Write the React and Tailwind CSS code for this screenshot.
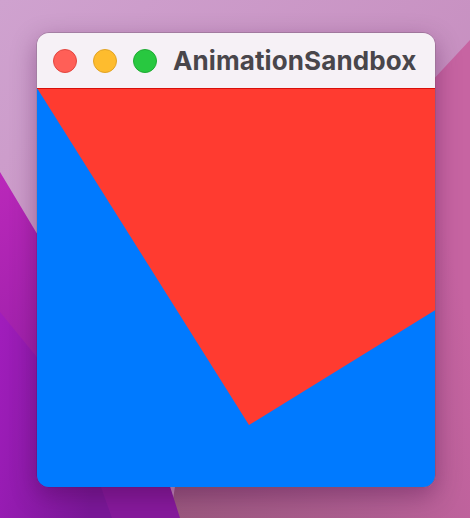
import React from 'react';

// Desktop wallpaper behind the window
function Wallpaper() {
  return (
    <svg className="absolute inset-0" width="470" height="518" viewBox="0 0 470 518">
      <defs>
        <linearGradient id="sky" x1="0" y1="0" x2="1" y2="1">
          <stop offset="0" stopColor="#cfa2cf" />
          <stop offset="0.6" stopColor="#c78fc0" />
          <stop offset="1" stopColor="#c77fb4" />
        </linearGradient>
        <linearGradient id="mauve" x1="0" y1="1" x2="1" y2="0.6">
          <stop offset="0" stopColor="#9a587e" />
          <stop offset="0.6" stopColor="#b05f92" />
          <stop offset="1" stopColor="#c764a2" />
        </linearGradient>
        <linearGradient id="magenta" x1="0" y1="0" x2="0.4" y2="1">
          <stop offset="0" stopColor="#ba28ba" />
          <stop offset="1" stopColor="#861a9c" />
        </linearGradient>
        <linearGradient id="violet" x1="0" y1="0" x2="1" y2="0.3">
          <stop offset="0" stopColor="#a11dbc" />
          <stop offset="1" stopColor="#7a1898" />
        </linearGradient>
      </defs>
      <rect width="470" height="518" fill="url(#sky)" />
      <polygon points="170,518 200,330 470,40 470,518" fill="url(#mauve)" />
      <polygon points="0,172 36,232 120,360 168,480 180,518 0,518" fill="url(#magenta)" />
      <polygon points="0,312 36,356 80,420 100,484 112,518 0,518" fill="url(#violet)" />
    </svg>
  );
}

export default function App() {
  return (
    <div className="relative h-[518px] w-[470px] overflow-hidden font-['Inter',sans-serif]">
      <Wallpaper />
      <div className="relative pt-8 pl-9">
        <div className="w-[400px] overflow-hidden rounded-[13px] border border-black/20 shadow-[0_8px_24px_rgba(60,0,60,0.35)]">
          <div className="flex h-[55px] items-center bg-[#f6f1f6] pl-4">
            <div className="flex gap-4">
              <span className="h-6 w-6 rounded-full border border-[#e2463f] bg-[#ff5f57]" />
              <span className="h-6 w-6 rounded-full border border-[#e1a325] bg-[#febc2e]" />
              <span className="h-6 w-6 rounded-full border border-[#1fab33] bg-[#28c840]" />
            </div>
            <span className="ml-4 text-[26px] font-bold tracking-[0.1px] text-[#49464b]">AnimationSandbox</span>
          </div>
          <svg className="block" width="400" height="399" viewBox="0 0 400 399">
            <rect width="400" height="399" fill="#007aff" />
            <polygon points="0,0 400,0 400,221 212,337" fill="#ff3b30" />
            <line x1="0" y1="0.5" x2="400" y2="0.5" stroke="#d80f0a" strokeWidth="1" />
          </svg>
        </div>
      </div>
    </div>
  );
}
